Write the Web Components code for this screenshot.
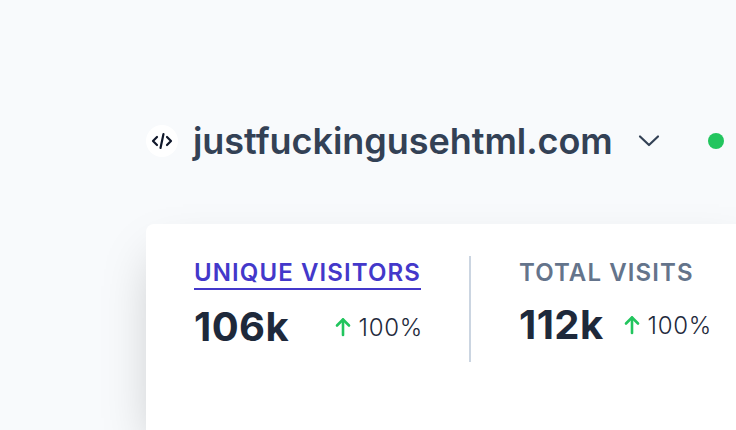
<!DOCTYPE html>
<html lang="en">
<head>
<meta charset="utf-8">
<title>Analytics</title>
<style>
  html, body { margin: 0; height: 100%; overflow: hidden; background: #f8fafc; }
  body { font-family: Inter, "Liberation Sans", sans-serif; }
</style>
</head>
<body>
<dash-page>
  <site-header slot="header" domain="justfuckingusehtml.com"></site-header>
  <stats-card>
    <stat-tile label="UNIQUE VISITORS" value="106k" change="100%" active></stat-tile>
    <stat-tile label="TOTAL VISITS" value="112k" change="100%"></stat-tile>
  </stats-card>
</dash-page>
<script>
class DashPage extends HTMLElement {
  constructor() {
    super();
    this.attachShadow({ mode: "open" });
    this.shadowRoot.innerHTML = `
      <style>
        :host {
          display: block;
          width: 590px;
          padding: 121px 0 0 146px;
        }
        .body { margin-top: 63px; }
      </style>
      <slot name="header"></slot>
      <div class="body"><slot></slot></div>
    `;
  }
}
customElements.define("dash-page", DashPage);

class SiteHeader extends HTMLElement {
  constructor() {
    super();
    this.attachShadow({ mode: "open" });
  }

  connectedCallback() {
    this.shadowRoot.innerHTML = `
      <style>
        :host {
          display: flex;
          align-items: center;
          height: 40px;
          white-space: nowrap;
        }
        .logo {
          width: 32px;
          height: 32px;
          border-radius: 50%;
          background: #fff;
          display: flex;
          align-items: center;
          justify-content: center;
          margin-right: 15px;
        }
        .domain {
          font-size: 36px;
          font-weight: 600;
          letter-spacing: -0.05px;
          color: #334155;
        }
        .chevron { margin-left: 24px; display: block; }
        .live {
          width: 16px;
          height: 16px;
          border-radius: 50%;
          background: #22c55e;
          margin-left: 47px;
        }
      </style>
      <div class="logo">
        <svg width="24" height="24" viewBox="0 0 24 24" fill="none" stroke="#0f172a" stroke-width="2.2" stroke-linecap="round" stroke-linejoin="round">
          <path d="M7 8l-4 4 4 4"/><path d="M17 8l4 4-4 4"/><path d="M13.500 5l-3 14"/>
        </svg>
      </div>
      <span class="domain">${this.getAttribute("domain")}</span>
      <svg class="chevron" width="24" height="24" viewBox="0 0 24 24" fill="none" stroke="#334155" stroke-width="2.2" stroke-linecap="round" stroke-linejoin="round">
        <path d="M3 7.500l9 8.500 9-8.500"/>
      </svg>
      <span class="live"></span>
    `;
  }
}
customElements.define("site-header", SiteHeader);

class StatsCard extends HTMLElement {
  constructor() {
    super();
    this.attachShadow({ mode: "open" });
    this.shadowRoot.innerHTML = `
      <style>
        :host {
          display: flex;
          height: 206px;
          margin-right: -20px;
          padding: 32px 0 0 0;
          box-sizing: border-box;
          background: #fff;
          border-radius: 8px 8px 0 0;
          box-shadow: 0 25px 50px -12px rgba(0, 0, 0, 0.25);
        }
      </style>
      <slot></slot>
    `;
  }
}
customElements.define("stats-card", StatsCard);

class StatTile extends HTMLElement {
  constructor() {
    super();
    this.attachShadow({ mode: "open" });
  }

  connectedCallback() {
    this.shadowRoot.innerHTML = `
      <style>
        :host {
          display: block;
          box-sizing: border-box;
          width: 325px;
          height: 106px;
          padding: 0 0 0 48px;
          border-right: 2px solid #cbd5e1;
        }
        :host(:last-child) { border-right: none; width: 269px; }
        .label {
          display: inline-block;
          padding-top: 2px;
          font-size: 24px;
          line-height: 30px;
          font-weight: 600;
          letter-spacing: 1.1px;
          color: #64748b;
          white-space: nowrap;
        }
        :host([active]) .label {
          color: #4338ca;
          border-bottom: 2px solid #4338ca;
        }
        .row {
          display: flex;
          align-items: center;
          justify-content: space-between;
          width: 229px;
          margin-top: 15px;
          white-space: nowrap;
        }
        :host(:last-child) .row { width: 193px; }
        .value {
          font-size: 40px;
          line-height: 44px;
          font-weight: 700;
          letter-spacing: 0.4px;
          color: #1e293b;
        }
        .change {
          display: flex;
          align-items: center;
          font-size: 24px;
          font-weight: 300;
          letter-spacing: 0.7px;
          color: #1e293b;
          gap: 7px;
        }
      </style>
      <div class="label">${this.getAttribute("label")}</div>
      <div class="row">
        <span class="value">${this.getAttribute("value")}</span>
        <span class="change">
          <svg width="18" height="20" viewBox="0 0 18 20" fill="none" stroke="#22c55e" stroke-width="2.600" stroke-linecap="round" stroke-linejoin="round">
            <path d="M9 18V2.500"/><path d="M3 8.500L9 2.500 15 8.500"/>
          </svg>
          ${this.getAttribute("change")}
        </span>
      </div>
    `;
  }
}
customElements.define("stat-tile", StatTile);
</script>
</body>
</html>
